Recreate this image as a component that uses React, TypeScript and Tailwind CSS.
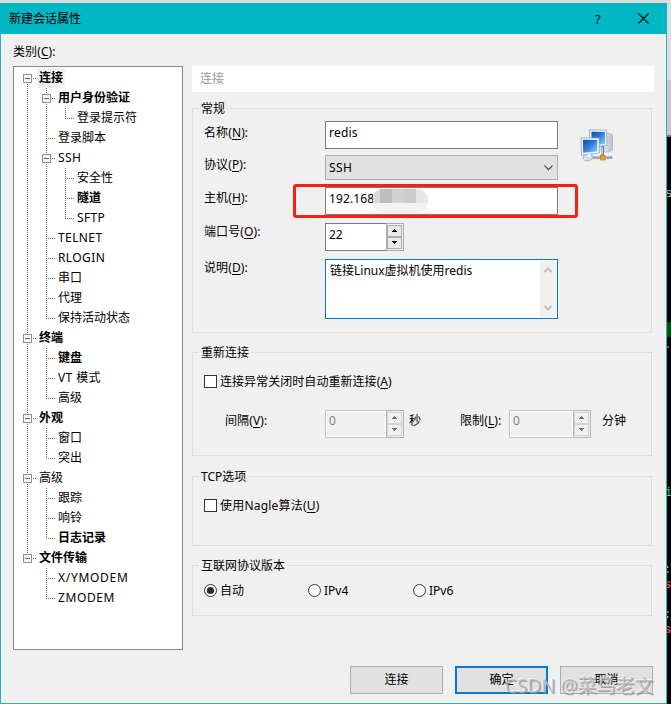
import React from "react";

type Seg = "v" | "t" | "l" | "box" | "boxTop" | "boxMid" | "boxEnd" | " ";

interface TreeRow {
  cells: Seg[];
  label: string;
  bold?: boolean;
  selected?: boolean;
  spacing?: string;
}

const rows: TreeRow[] = [
  { cells: ["boxTop"], label: "连接", bold: true, selected: true },
  { cells: ["v", "boxMid"], label: "用户身份验证", bold: true },
  { cells: ["v", "v", "l"], label: "登录提示符" },
  { cells: ["v", "t"], label: "登录脚本" },
  { cells: ["v", "boxMid"], label: "SSH", spacing: "tracking-[0.35px]" },
  { cells: ["v", "v", "t"], label: "安全性" },
  { cells: ["v", "v", "t"], label: "隧道", bold: true },
  { cells: ["v", "v", "l"], label: "SFTP", spacing: "tracking-[0.3px]" },
  { cells: ["v", "t"], label: "TELNET", spacing: "tracking-[0.4px]" },
  { cells: ["v", "t"], label: "RLOGIN", spacing: "tracking-[0.4px]" },
  { cells: ["v", "t"], label: "串口" },
  { cells: ["v", "t"], label: "代理" },
  { cells: ["v", "l"], label: "保持活动状态" },
  { cells: ["boxMid"], label: "终端", bold: true },
  { cells: ["v", "t"], label: "键盘", bold: true },
  { cells: ["v", "t"], label: "VT 模式", spacing: "tracking-[0.4px]" },
  { cells: ["v", "l"], label: "高级" },
  { cells: ["boxMid"], label: "外观", bold: true },
  { cells: ["v", "t"], label: "窗口" },
  { cells: ["v", "l"], label: "突出" },
  { cells: ["boxMid"], label: "高级" },
  { cells: ["v", "t"], label: "跟踪" },
  { cells: ["v", "t"], label: "响铃" },
  { cells: ["v", "l"], label: "日志记录", bold: true },
  { cells: ["boxEnd"], label: "文件传输", bold: true },
  { cells: [" ", "t"], label: "X/YMODEM", spacing: "tracking-[0.7px]" },
  { cells: [" ", "l"], label: "ZMODEM", spacing: "tracking-[0.6px]" },
];

function TreeCell({ kind }: { kind: Seg }) {
  const isBox = kind.startsWith("box");
  const top = kind === "boxTop" ? 10 : 0;
  const bottom = kind === "l" || kind === "boxEnd" ? 11 : 20;
  return (
    <svg width="19" height="20" className="shrink-0" shapeRendering="crispEdges">
      {kind !== " " && (
        <path d={`M9.5 ${top}V${bottom}`} stroke="#6d6d6d" strokeDasharray="1 1" />
      )}
      {kind !== " " && kind !== "v" && (
        <path d="M9 10.5H19" stroke="#6d6d6d" strokeDasharray="1 1" />
      )}
      {isBox && (
        <g>
          <rect x="4" y="5" width="11" height="11" fill="#fff" />
          <rect x="5.5" y="6.5" width="8" height="8" fill="#f6f6f6" stroke="#919191" />
          <path d="M7 10.5H12" stroke="#4664b0" />
        </g>
      )}
    </svg>
  );
}

function Tree() {
  return (
    <div className="h-[584px] w-[170px] border border-[#828790] bg-white pt-px pl-1">
      {rows.map((r, i) => (
        <div key={i} className="flex h-5">
          {r.cells.map((c, j) => (
            <TreeCell key={j} kind={c} />
          ))}
          <span
            className={`h-5 px-0.5 leading-5 whitespace-nowrap ${r.bold ? "font-bold" : ""} ${
              r.selected ? "bg-[#f0f0f0]" : ""
            } ${r.spacing ?? ""}`}
          >
            {r.label}
          </span>
        </div>
      ))}
    </div>
  );
}

function Label({ text, k, className = "" }: { text: string; k: string; className?: string }) {
  return (
    <span className={`leading-[18px] tracking-[0.1px] whitespace-nowrap ${className}`}>
      {text}(<span className="underline underline-offset-2">{k}</span>)
      {":"}
    </span>
  );
}

function Group({ title, className, children }: { title: string; className: string; children: React.ReactNode }) {
  return (
    <fieldset className={`w-[460px] border border-[#dcdcdc] pl-[11px] ${className}`}>
      <legend className="-ml-[5px] h-[17px] px-0.5 leading-[18px]">{title}</legend>
      {children}
    </fieldset>
  );
}

function Spinner({ value, disabled = false, className = "" }: { value: string; disabled?: boolean; className?: string }) {
  const arrow = disabled ? "#6d6d6d" : "#000";
  const edge = disabled ? "#d2d2d2" : "#acacac";
  const face = disabled ? "#f0f0f0" : "#e9e9e9";
  return (
    <div
      className={`flex h-7 border ${
        disabled ? "border-[#c4c4c4] bg-[#f0f0f0] text-[#838383]" : "border-[#7a7a7a] bg-white"
      } ${className}`}
    >
      <span className={`flex-1 ${disabled ? "border border-white pl-0.5 leading-[18px]" : "pl-[3px] leading-[22px]"}`}>
        {value}
      </span>
      <svg width="18" height="28" className="-my-px -mr-px shrink-0" shapeRendering="crispEdges">
        <rect x="0.5" y="0.5" width="17" height="27" fill="#f0f0f0" stroke={disabled ? "#b4b4b4" : "#ababab"} />
        <rect x="1.5" y="2.5" width="14" height="11" fill={face} stroke={edge} />
        <rect x="1.5" y="14.5" width="14" height="11" fill={face} stroke={edge} />
        <path d="M8 6h1v1h1v1h1v1H6V8h1V7h1z" fill={arrow} />
        <path d="M6 18h5v1h-1v1H9v1H8v-1H7v-1H6z" fill={arrow} />
      </svg>
    </div>
  );
}

function Check() {
  return <span className="h-[13px] w-[13px] shrink-0 border border-[#333] bg-white" />;
}

function Radio({ on = false, label, className = "" }: { on?: boolean; label: string; className?: string }) {
  return (
    <div className={`flex h-[13px] items-center gap-[3px] ${className}`}>
      <svg width="13" height="13" className="shrink-0">
        <circle cx="6.5" cy="6.5" r="6" fill="#fff" stroke="#333" />
        {on && <circle cx="6.5" cy="6.5" r="3.6" fill="#2b2b2b" />}
      </svg>
      <span className="leading-4">{label}</span>
    </div>
  );
}

function NetworkIcon() {
  return (
    <svg width="34" height="34" viewBox="0 0 34 34">
      <defs>
        <linearGradient id="scr" x1="0" y1="0" x2="1" y2="1">
          <stop offset="0" stopColor="#1648b4" />
          <stop offset="0.45" stopColor="#2a78dc" />
          <stop offset="1" stopColor="#8fd4fa" />
        </linearGradient>
        <linearGradient id="tower" x1="0" y1="0" x2="1" y2="0">
          <stop offset="0" stopColor="#f4f7fa" />
          <stop offset="1" stopColor="#aebccb" />
        </linearGradient>
      </defs>
      <path d="M24 5l4-1 4.500 2v15l-4.500 2h-4z" fill="url(#tower)" stroke="#9fb0c0" strokeWidth="0.7" />
      <path d="M28 5v18M29.5 9l2 .5M29.5 12l2 .3" stroke="#b8c6d2" strokeWidth="0.8" />
      <path d="M9.5.8L26.5 1.2 27 16.5 9.5 18z" fill="#edf3f8" stroke="#91a6b9" strokeWidth="0.8" />
      <path d="M11.5 2.8L25 3v12l-13.5 1z" fill="url(#scr)" />
      <path d="M17 18l6-1 3 2-4 2h-5z" fill="#d8e3ec" stroke="#9eb1c2" strokeWidth="0.6" />
      <path d="M1 8.8l18 .2.4 15L1.500 26z" fill="#f0f5f9" stroke="#8ca4ba" strokeWidth="0.8" />
      <path d="M3 10.800l14.200.2v11.500L3.200 23.800z" fill="url(#scr)" />
      <path d="M3 28c0-2 4-3 7-2.500s4 1.500 3 3.500-4 3-6.500 2.800S3 30 3 28z" fill="#dce6ed" stroke="#94a8b9" strokeWidth="0.8" />
      <path d="M7 25v4h4v-4" fill="#f7fafc" stroke="#a7b7c4" strokeWidth="0.6" />
      <path d="M14 28.500H31M22.700 26V18" stroke="#72879c" strokeWidth="2.600" strokeLinecap="round" />
      <path d="M14 28H31M22.300 25V18" stroke="#c9d9e5" strokeWidth="1.100" />
      <rect x="20.500" y="26.500" width="4.500" height="4.500" fill="#f6a21a" stroke="#c9780c" strokeWidth="0.700" />
    </svg>
  );
}

function TextBox({ children, className = "" }: { children: React.ReactNode; className?: string }) {
  return (
    <div className={`h-7 w-[233px] border border-[#7a7a7a] bg-white pl-[3px] leading-[22px] ${className}`}>
      {children}
    </div>
  );
}

function HostField() {
  return (
    <div className="relative">
      <TextBox className="tracking-[0.1px]">192.168</TextBox>
      <div className="absolute top-0.5 left-12 flex h-6 w-[55px] flex-col overflow-hidden rounded-r-[11px] rounded-l-[9px] bg-[#f3f3f3]">
        <div className="flex h-[14px]">
          <span className="w-[7px] bg-[#dad8de]" />
          <span className="w-3 bg-[#bfbdb8]" />
          <span className="w-3 bg-[#d0d0d5]" />
          <span className="w-3 bg-[#cccccc]" />
          <span className="flex-1 bg-[#e7e7e7]" />
        </div>
      </div>
      <div className="absolute -top-[3px] -left-8 h-[34px] w-[285px] rounded-[3px] border-[3px] border-[#ff1e12]" />
    </div>
  );
}

function General() {
  return (
    <Group title="常规" className="mt-2 h-[233px]">
      <div className="flex">
        <div className="grid grid-cols-[121px_233px] pt-1">
          <Label text="名称" k="N" className="mt-[3px]" />
          <TextBox className="tracking-[0.2px]">redis</TextBox>
          <Label text="协议" k="P" className="mt-[7px]" />
          <div className="mt-1.5 flex h-[25px] items-center justify-between border border-[#adadad] bg-[#e1e1e1] pr-1 pl-[3px]">
            <span className="leading-5 tracking-[0.35px]">SSH</span>
            <svg width="9" height="6" fill="none" stroke="#404040" strokeWidth="1.2">
              <path d="M.5 .7l4 4 4-4" />
            </svg>
          </div>
          <Label text="主机" k="H" className="mt-[9px]" />
          <div className="mt-[7px]">
            <HostField />
          </div>
          <Label text="端口号" k="O" className="mt-[8px]" />
          <Spinner value="22" className="mt-2 w-[79px]" />
          <Label text="说明" k="D" className="mt-[8px]" />
          <div className="mt-2 flex h-[60px] justify-between border border-[#0078d7] bg-white p-px pl-1">
            <span className="leading-5">链接Linux虚拟机使用redis</span>
            <div className="flex w-4 flex-col items-center justify-between bg-[#f0f0f0] py-1.5">
              <svg width="8" height="6" fill="none" stroke="#bfbfbf" strokeWidth="2">
                <path d="M.5 5L4 1.500 7.500 5" />
              </svg>
              <svg width="8" height="6" fill="none" stroke="#bfbfbf" strokeWidth="2">
                <path d="M.5 1L4 4.500 7.500 1" />
              </svg>
            </div>
          </div>
        </div>
        <div className="mt-3 ml-[22px]">
          <NetworkIcon />
        </div>
      </div>
    </Group>
  );
}

function Reconnect() {
  return (
    <Group title="重新连接" className="mt-[11px] h-28">
      <div className="mt-[14px] flex h-[13px] items-center gap-[3px]">
        <Check />
        <span className="leading-4 tracking-[0.05px]">
          连接异常关闭时自动重新连接(<span className="underline underline-offset-2">A</span>)
        </span>
      </div>
      <div className="mt-[22px] flex pl-[21px]">
        <Label text="间隔" k="V" className="mt-[2px] w-[100px]" />
        <Spinner value="0" disabled className="w-[79px]" />
        <span className="mt-[3px] ml-[5px] w-[51px] leading-4">秒</span>
        <Label text="限制" k="L" className="mt-[2px] w-[49px]" />
        <Spinner value="0" disabled className="w-[82px]" />
        <span className="mt-[3px] ml-[11px] leading-4">分钟</span>
      </div>
    </Group>
  );
}

function Button({ label, primary = false }: { label: string; primary?: boolean }) {
  return (
    <button
      className={`flex h-7 w-[93px] items-center justify-center bg-[#e1e1e1] ${
        primary ? "border-2 border-[#0078d7]" : "border border-[#adadad]"
      }`}
    >
      {label}
    </button>
  );
}

function TerminalEdge() {
  return (
    <div className="flex w-1 flex-col overflow-hidden bg-black font-['Liberation_Mono'] text-[12px] leading-4">
      <div className="h-20 bg-[#dedede]" />
      <div className="h-[55px] bg-[#c8c6c8]" />
      <div className="h-0.5 bg-[#77778c]" />
      <span className="mt-[49px] -ml-0.5 h-4 text-[#bfb8aa]">s</span>
      <div className="mt-[120px] h-[15px] bg-[#005000]" />
      <div className="mt-[9px] h-0.5 w-0.5 bg-[#b33b2e]" />
      <span className="mt-[137px] -ml-0.5 h-4 text-[#4fc98a]">i</span>
      <span className="mt-[61px] -ml-[3px] h-4 text-[#b9a98c]">:</span>
      <span className="-mt-px -ml-[3px] h-4 font-bold text-[#d64a40]">s</span>
      <span className="mt-[14px] -ml-[3px] h-4 text-[#b9a98c]">:</span>
      <span className="-mt-px -ml-[3px] h-4 font-bold text-[#d64a40]">s</span>
    </div>
  );
}

export default function App() {
  return (
    <div className="relative flex h-[704px] w-[671px] overflow-hidden font-['Noto_Sans','Noto_Sans_CJK_SC',sans-serif] text-[12px] text-black">
      <div className="flex w-[667px] flex-col">
        <div className="h-[3px] bg-[#dcdcdc]" />
        <div className="flex h-[31px] items-center bg-[#00b7c3] pl-[9px]">
          <span className="flex-1 leading-4">新建会话属性</span>
          <span className="w-[43px] text-[13px] leading-4">?</span>
          <svg width="11" height="11" className="mr-[18px]" stroke="#000" strokeWidth="1.1">
            <path d="M.5 .5l10 10M10.500 .5l-10 10" />
          </svg>
        </div>
        <div className="flex flex-1 border-x border-b border-[#1cb5c0] bg-[#f0f0f0] pl-3">
          <div className="w-[179px] pt-[9px]">
            <div className="h-[23px] leading-[18px] tracking-[0.1px]">
              类别(<span className="underline underline-offset-2">C</span>):
            </div>
            <Tree />
          </div>
          <div className="pt-8">
            <div className="h-[26px] w-[462px] bg-white pl-2 leading-[26px] text-[#999]">连接</div>
            <General />
            <Reconnect />
            <Group title="TCP选项" className="mt-3 h-[78px]">
              <div className="mt-[14px] flex h-[13px] items-center gap-[3px]">
                <Check />
                <span className="leading-4 tracking-[0.2px]">
                  使用Nagle算法(<span className="underline underline-offset-2">U</span>)
                </span>
              </div>
            </Group>
            <Group title="互联网协议版本" className="mt-[11px] h-[59px]">
              <div className="mt-[10px] flex">
                <Radio on label="自动" className="w-[104px]" />
                <Radio label="IPv4" className="w-[105px]" />
                <Radio label="IPv6" />
              </div>
            </Group>
            <div className="mt-[50px] ml-[158px] flex gap-3">
              <Button label="连接" />
              <Button label="确定" primary />
              <Button label="取消" />
            </div>
          </div>
        </div>
      </div>
      <TerminalEdge />
      <div className="absolute top-[673px] left-[505px] text-[19px] leading-[26px] whitespace-nowrap text-[#b4b4b4]/70 [text-shadow:-1px_-1px_0_rgba(255,255,255,0.5),1px_1px_0_rgba(120,120,120,0.6)]">
        CSDN @菜鸟老文
      </div>
    </div>
  );
}
